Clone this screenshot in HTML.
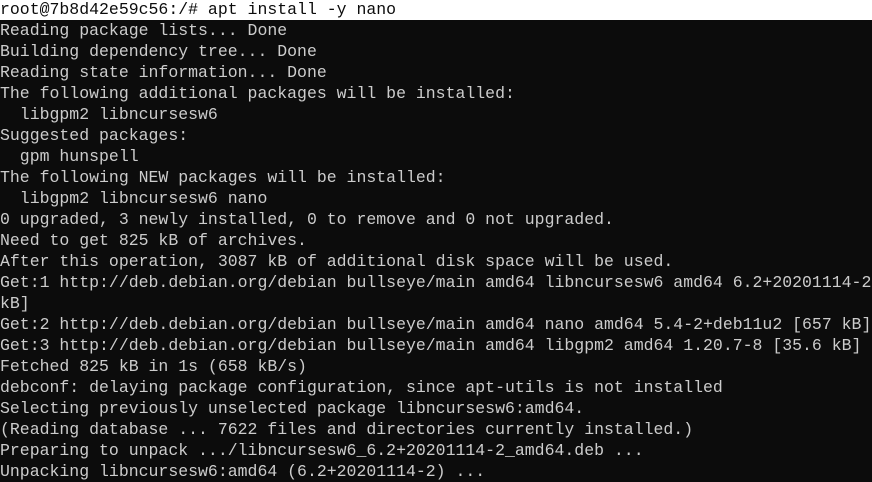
<!DOCTYPE html>
<html><head><style>
html,body{margin:0;padding:0;background:#0c0c0c;width:872px;height:476px;overflow:hidden}
pre{margin:0;position:absolute;top:-1px;left:0;font-family:"Liberation Mono","DejaVu Sans Mono",monospace;font-size:16.5px;line-height:21px;color:#cccccc;white-space:pre}
.w{display:block;background:#fff;color:#0c0c0c;width:872px;height:21px}
</style></head><body><pre><span class="w">root@7b8d42e59c56:/# apt install -y nano</span>Reading package lists... Done
Building dependency tree... Done
Reading state information... Done
The following additional packages will be installed:
  libgpm2 libncursesw6
Suggested packages:
  gpm hunspell
The following NEW packages will be installed:
  libgpm2 libncursesw6 nano
0 upgraded, 3 newly installed, 0 to remove and 0 not upgraded.
Need to get 825 kB of archives.
After this operation, 3087 kB of additional disk space will be used.
Get:1 http://deb.debian.org/debian bullseye/main amd64 libncursesw6 amd64 6.2+20201114-2
kB]
Get:2 http://deb.debian.org/debian bullseye/main amd64 nano amd64 5.4-2+deb11u2 [657 kB]
Get:3 http://deb.debian.org/debian bullseye/main amd64 libgpm2 amd64 1.20.7-8 [35.6 kB]
Fetched 825 kB in 1s (658 kB/s)
debconf: delaying package configuration, since apt-utils is not installed
Selecting previously unselected package libncursesw6:amd64.
(Reading database ... 7622 files and directories currently installed.)
Preparing to unpack .../libncursesw6_6.2+20201114-2_amd64.deb ...
Unpacking libncursesw6:amd64 (6.2+20201114-2) ...</pre></body></html>
